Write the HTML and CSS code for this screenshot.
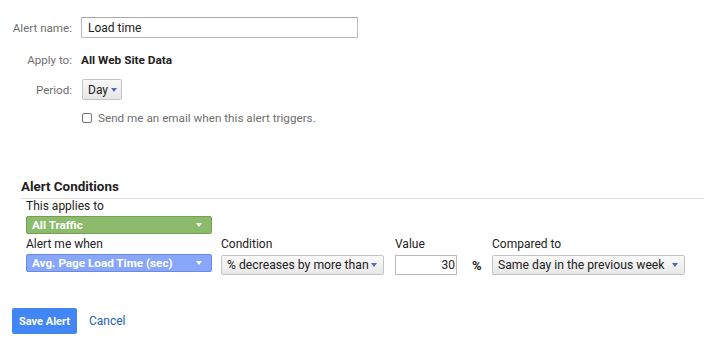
FILE: index.html
```html
<!DOCTYPE html>
<html lang="en">
<head>
  <meta charset="UTF-8" />
  <title>Create Alert</title>
  <link rel="stylesheet" href="styles.css">
</head>
<body>

  <div class="alert-form">
    <div class="row row-name">
      <label class="label" for="alert-name">Alert name:</label>
      <input type="text" id="alert-name" class="text-input" value="Load time" />
    </div>
    <div class="row row-apply">
      <span class="label">Apply to:</span>
      <span class="strong">All Web Site Data</span>
    </div>
    <div class="row row-period">
      <span class="label">Period:</span>
      <button class="period-btn">Day <span class="caret caret-dark"></span></button>
    </div>
    <div class="row row-email">
      <span class="label"></span>
      <label class="check"><span class="box"></span>Send me an email when this alert triggers.</label>
    </div>
  </div>

  <div class="conditions">
    <h3>Alert Conditions</h3>
    <div class="cond-body">
      <div class="field-label">This applies to</div>
      <div class="pill pill-green">All Traffic <span class="caret caret-white"></span></div>

      <div class="cond-grid">
        <div class="col col-metric">
          <div class="field-label">Alert me when</div>
          <div class="pill pill-blue">Avg. Page Load Time (sec) <span class="caret caret-white"></span></div>
        </div>
        <div class="col col-cond">
          <div class="field-label">Condition</div>
          <div class="select">% decreases by more than <span class="caret caret-dark"></span></div>
        </div>
        <div class="col col-value">
          <div class="field-label">Value</div>
          <div class="value-wrap"><div class="value-input">30</div><span class="pct">%</span></div>
        </div>
        <div class="col col-compare">
          <div class="field-label">Compared to</div>
          <div class="select select-wide">Same day in the previous week <span class="caret caret-dark"></span></div>
        </div>
      </div>
    </div>
  </div>

  <div class="actions">
    <button class="save-btn">Save Alert</button>
    <a href="#" class="cancel">Cancel</a>
  </div>

</body>
</html>
```

FILE: styles.css
```css
body {
  font-family: Roboto, "Liberation Sans", Arial, sans-serif;
  font-size: 12px;
  color: #222;
  background: #fff;
  margin: 0;
  padding: 0;
}
.alert-form {
  padding-top: 17px;
}
.row {
  display: flex;
  align-items: center;
}
.label {
  width: 72px;
  padding-right: 9px;
  text-align: right;
  color: #6f6f6f;
  font-size: 11.6px;
  flex-shrink: 0;
}
.text-input {
  width: 277px;
  height: 21px;
  box-sizing: border-box;
  border: 1px solid #bbb;
  border-top-color: #a8a8a8;
  padding: 0 6px;
  font-family: inherit;
  font-size: 12px;
  color: #222;
  margin: 0;
}
.row-apply {
  margin-top: 11px;
  height: 21px;
}
.strong {
  font-weight: bold;
  font-size: 11.8px;
  color: #222;
}
.row-period {
  margin-top: 9px;
}
.period-btn {
  height: 21px;
  margin-left: 1px;
  padding: 0 4px 0 5px;
  border: 1px solid #c4c4c4;
  border-radius: 2px;
  background: linear-gradient(#f8f8f8, #e6e6e6);
  font-family: inherit;
  font-size: 12px;
  color: #222;
  display: flex;
  align-items: center;
  gap: 3px;
}
.row-email {
  margin-top: 11px;
  color: #6f6f6f;
}
.check {
  display: flex;
  align-items: center;
  margin-left: 1px;
  font-size: 11.7px;
}
.box {
  width: 8px;
  height: 8px;
  border: 1px solid #777;
  border-radius: 2px;
  margin-right: 6px;
}
.caret {
  display: inline-block;
  width: 0;
  height: 0;
  border-left: 3.5px solid transparent;
  border-right: 3.5px solid transparent;
  border-top: 4px solid #4a6bb5;
}
.caret-white {
  border-top-color: #fff;
}
.conditions {
  margin-top: 54px;
  padding-left: 21px;
}
h3 {
  margin: 0;
  font-size: 13.4px;
  font-weight: bold;
  color: #222;
  line-height: 16px;
  padding-bottom: 3px;
  border-bottom: 1px solid #ddd;
}
.cond-body {
  padding-left: 5px;
}
.field-label {
  font-size: 12px;
  line-height: 15px;
  color: #222;
}
.pill {
  width: 186px;
  height: 18px;
  box-sizing: border-box;
  margin-top: 2px;
  padding: 0 9px 0 5px;
  border-radius: 2px;
  color: #fff;
  font-weight: bold;
  font-size: 11.7px;
  display: flex;
  align-items: center;
  justify-content: space-between;
}
.pill-green {
  background: #8cbb6c;
  border: 1px solid #74a056;
}
.pill-blue {
  background: #88a6fa;
  border: 1px solid #6a8ae8;
}
.cond-grid {
  display: flex;
  margin-top: 3px;
}
.col-metric {
  width: 195px;
}
.col-cond {
  width: 174px;
}
.col-value {
  width: 97px;
}
.select {
  width: 163px;
  height: 20px;
  box-sizing: border-box;
  margin-top: 3px;
  padding: 0 6px 0 5px;
  border: 1px solid #c4c4c4;
  border-radius: 2px;
  background: linear-gradient(#fafafa, #e8e8e8);
  font-size: 12.2px;
  color: #222;
  display: flex;
  align-items: center;
  justify-content: space-between;
}
.select-wide {
  width: 193px;
}
.value-wrap {
  display: flex;
  align-items: center;
  margin-top: 3px;
}
.value-input {
  width: 62px;
  height: 20px;
  box-sizing: border-box;
  border: 1px solid #bbb;
  padding: 0 1px;
  text-align: right;
  line-height: 18px;
  font-size: 12px;
}
.pct {
  font-weight: bold;
  font-size: 13px;
  margin-left: 15px;
}
.actions {
  display: flex;
  align-items: center;
  margin-top: 33px;
  padding-left: 12px;
}
.save-btn {
  height: 26px;
  width: 65px;
  border: none;
  border-radius: 2px;
  background: #4285f4;
  color: #fff;
  font-family: inherit;
  font-weight: bold;
  font-size: 11px;
  padding: 0;
}
.cancel {
  margin-left: 12px;
  color: #1a62b8;
  text-decoration: none;
  font-size: 12px;
}
```
